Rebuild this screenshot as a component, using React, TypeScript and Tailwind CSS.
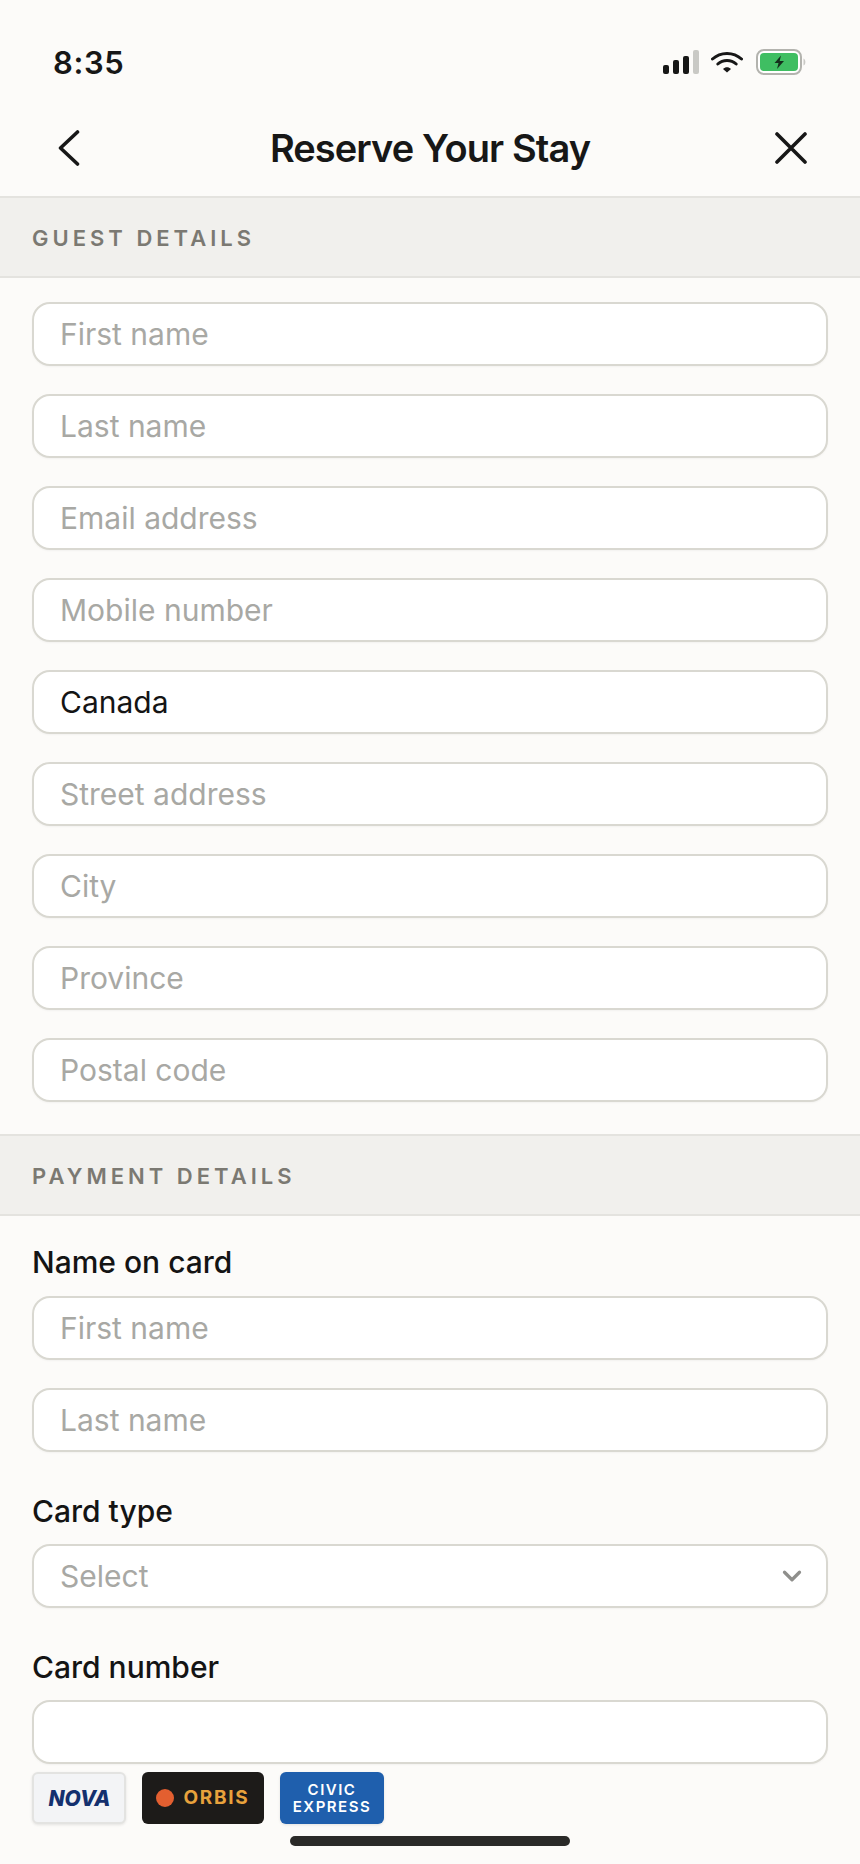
import { ChevronDown } from 'lucide-react';

const font = { fontFamily: 'Inter, "Liberation Sans", sans-serif' };

function SectionBar({ title }: { title: string }) {
  return (
    <div className="flex h-[82px] items-center border-y-2 border-[#e4e3df] bg-[#f1f0ed] px-8">
      <h2 className="mt-[2px] text-[22px] font-semibold tracking-[0.182em] text-[#7b7972]">{title}</h2>
    </div>
  );
}

function Field({ text, filled, select }: { text?: string; filled?: boolean; select?: boolean }) {
  return (
    <div className="flex h-[64px] items-center justify-between rounded-[18px] border-2 border-[#d9d8d1] bg-white pl-[26px] pr-[19px] shadow-[0_1px_2px_rgba(0,0,0,0.04)]">
      <span className={`mt-[1px] text-[30px] ${filled ? 'text-[#141414]' : 'text-[#a8a8a4]'}`}>{text}</span>
      {select && <ChevronDown size={30} strokeWidth={2.6} className="text-[#8f8f8c]" />}
    </div>
  );
}

function Label({ children }: { children: string }) {
  return <div className="text-[30px] leading-[36px] font-medium text-[#141414]">{children}</div>;
}

function StatusBar() {
  return (
    <div className="flex h-[98px] items-start justify-between pt-[44px] pl-[53px] pr-[53px]">
      <span className="text-[31px] leading-[38px] font-semibold tracking-[0.02em] text-[#171717]">8:35</span>
      <div className="flex items-center gap-[12px] pt-[5px]">
        <svg width="36" height="24" viewBox="0 0 36 24">
          <rect x="0" y="15" width="6" height="9" rx="2" fill="#171717" />
          <rect x="10" y="10" width="6" height="14" rx="2" fill="#171717" />
          <rect x="20" y="6" width="6" height="18" rx="2" fill="#171717" />
          <rect x="30" y="0" width="6" height="24" rx="2" fill="#c9c9c5" />
        </svg>
        <svg width="32" height="22" viewBox="0 0 32 22" fill="none">
          <path d="M1.5 8 C9.5 0.5 22.5 0.5 30.5 8" stroke="#171717" strokeWidth="3" strokeLinecap="round" />
          <path d="M6.8 13 C12 8.2 20 8.2 25.2 13" stroke="#171717" strokeWidth="3" strokeLinecap="round" />
          <path d="M12 18 L16 21.5 L20 18 C17.6 15.8 14.4 15.8 12 18 Z" fill="#171717" />
        </svg>
        <svg width="51" height="26" viewBox="0 0 51 26" className="ml-[1px]">
          <rect x="1" y="1" width="44" height="24" rx="7" fill="#fff" stroke="#b3b3ae" strokeWidth="2" />
          <rect x="4" y="4" width="38" height="18" rx="4" fill="#3fbe62" />
          <path d="M47.5 9.5 C50 10.5 50 15.5 47.5 16.5 Z" fill="#c9c9c5" />
          <path d="M25 6.5 L18.5 14 H22.5 L21 20 L28 12 H23.7 Z" fill="#15301d" />
        </svg>
      </div>
    </div>
  );
}

function CardLogos() {
  return (
    <div className="mt-[8px] flex items-center gap-4">
      <div className="flex h-[52px] w-[94px] items-center justify-center rounded-[6px] border-2 border-[#e3e3e1] bg-[#f3f4f6] shadow-[0_1px_3px_rgba(0,0,0,0.1)]">
        <span className="ml-[1px] mt-[1px] text-[21px] font-extrabold italic text-[#14306e]">NOVA</span>
      </div>
      <div className="flex h-[52px] w-[122px] items-center justify-center gap-[9px] rounded-[6px] bg-[#1d1b19]">
        <span className="size-[18px] rounded-full bg-[#e35f30]" />
        <span className="text-[19px] font-bold tracking-[0.09em] text-[#e8a23c]">ORBIS</span>
      </div>
      <div className="flex h-[52px] w-[104px] flex-col items-center justify-center rounded-[6px] bg-[#1f5fad] text-[15px] leading-[17px] font-semibold tracking-[0.1em] text-white shadow-[0_1px_3px_rgba(0,0,0,0.1)]">
        <span>CIVIC</span>
        <span>EXPRESS</span>
      </div>
    </div>
  );
}

export default function App() {
  const guest = ['First name', 'Last name', 'Email address', 'Mobile number', 'Canada', 'Street address', 'City', 'Province', 'Postal code'];

  return (
    <div className="relative h-[1864px] w-[860px] overflow-hidden bg-[#fcfbf9]" style={font}>
      <StatusBar />
      <header className="flex h-[98px] items-center justify-between pl-[58px] pr-[53px]">
        <svg width="22" height="36" viewBox="0 0 22 36" fill="none" className="mt-[2px]">
          <path d="M19.5 2 L2.5 18 L19.5 34" stroke="#171717" strokeWidth="3.6" strokeLinecap="round" strokeLinejoin="round" />
        </svg>
        <h1 className="mt-[3px] ml-[5px] text-[38px] font-semibold tracking-[-0.024em] text-[#171717]">Reserve Your Stay</h1>
        <svg width="32" height="32" viewBox="0 0 32 32" fill="none" className="mt-[2px]">
          <path d="M2 2 L30 30 M30 2 L2 30" stroke="#171717" strokeWidth="3.6" strokeLinecap="round" />
        </svg>
      </header>

      <SectionBar title="GUEST DETAILS" />
      <div className="flex flex-col gap-[28px] px-8 pt-[24px] pb-[32px]">
        {guest.map((g) => (
          <Field key={g} text={g} filled={g === 'Canada'} />
        ))}
      </div>

      <SectionBar title="PAYMENT DETAILS" />
      <div className="px-8 pt-[28px]">
        <Label>Name on card</Label>
        <div className="mt-[16px] flex flex-col gap-[28px]">
          <Field text="First name" />
          <Field text="Last name" />
        </div>
        <div className="mt-[41px]">
          <Label>Card type</Label>
        </div>
        <div className="mt-[15px]">
          <Field text="Select" select />
        </div>
        <div className="mt-[41px]">
          <Label>Card number</Label>
        </div>
        <div className="mt-[15px]">
          <Field />
        </div>
        <CardLogos />
      </div>

      <div className="absolute bottom-[18px] left-[290px] h-[10px] w-[280px] rounded-full bg-[#2a2a28]" />
    </div>
  );
}
